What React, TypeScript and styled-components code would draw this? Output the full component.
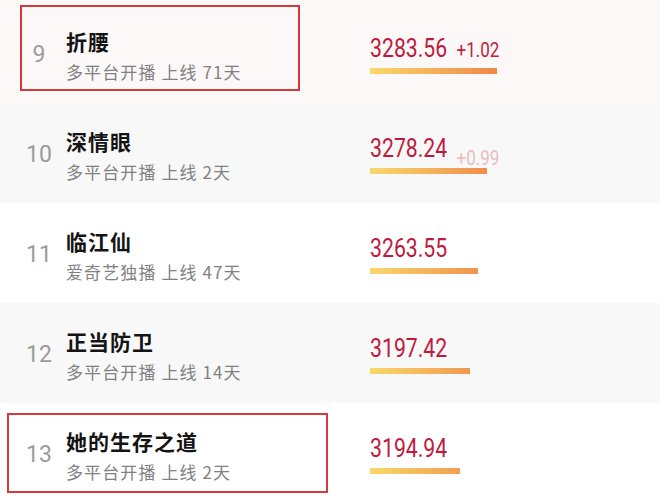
import React from "react";
import styled, { createGlobalStyle } from "styled-components";

const Global = createGlobalStyle`
  html, body { margin: 0; padding: 0; background: #ffffff; }
  body { width: 660px; height: 496px; overflow: hidden; font-family: "Noto Sans CJK SC", "Noto Sans", sans-serif; }
`;

const List = styled.div`
  padding-top: 3px;
  background: #fcf8f8;
`;

const Row = styled.div<{ $bg: string }>`
  position: relative;
  height: 100px;
  background: ${(p) => p.$bg};
  display: grid;
  grid-template-columns: 66px 304px 1fr;
  align-items: start;
`;

const Rank = styled.div`
  padding-left: 12px;
  padding-top: 39px;
  text-align: center;
  font-family: Roboto, "Noto Sans", sans-serif;
  font-size: 23px;
  line-height: 26px;
  color: #9b9b9b;
`;

const Info = styled.div`
  padding-top: 26px;
  display: flex;
  flex-direction: column;
`;

const Title = styled.div`
  font-family: "Noto Sans CJK SC", sans-serif;
  font-weight: 700;
  font-size: 21px;
  line-height: 24px;
  letter-spacing: 1px;
  color: #141414;
`;

const Sub = styled.div`
  margin-top: 9px;
  font-family: "Noto Sans CJK SC", sans-serif;
  font-size: 17px;
  line-height: 20px;
  letter-spacing: 1.1px;
  color: #818181;
`;

const ScoreCol = styled.div`
  padding-top: 33px;
  display: flex;
  flex-direction: column;
  align-items: flex-start;
`;

const ScoreLine = styled.div`
  display: flex;
  align-items: baseline;
  transform: scaleX(0.85);
  transform-origin: left center;
  font-family: Roboto, "Noto Sans", sans-serif;
  white-space: nowrap;
`;

const Score = styled.span`
  font-size: 25px;
  line-height: 25px;
  color: #bf1a3c;
`;

const Delta = styled.span<{ $dim?: boolean }>`
  margin-left: 11px;
  font-size: 20px;
  line-height: 20px;
  color: ${(p) => (p.$dim ? "#e9bcc3" : "#c0223f")};
  transform: ${(p) => (p.$dim ? "translateY(8px)" : "none")};
`;

const Bar = styled.div`
  margin-top: 7px;
  height: 6px;
  background: linear-gradient(90deg, #f9d86c 0%, #ee8549 100%);
  background-size: 130px 100%;
  background-repeat: no-repeat;
`;

const Mark = styled.div<{ $top: number; $left: number; $w: number; $h: number }>`
  position: absolute;
  top: ${(p) => p.$top}px;
  left: ${(p) => p.$left}px;
  width: ${(p) => p.$w}px;
  height: ${(p) => p.$h}px;
  border: 2px solid #d63a3c;
  box-sizing: border-box;
  pointer-events: none;
`;

type Item = {
  rank: number;
  title: string;
  sub: string;
  score: string;
  delta?: string;
  dim?: boolean;
  bar: number;
  bg: string;
  mark?: { top: number; left: number; w: number; h: number };
};

const items: Item[] = [
  { rank: 9, title: "折腰", sub: "多平台开播 上线 71天", score: "3283.56", delta: "+1.02", bar: 127, bg: "#fcf8f8", mark: { top: 2, left: 20, w: 280, h: 86 } },
  { rank: 10, title: "深情眼", sub: "多平台开播 上线 2天", score: "3278.24", delta: "+0.99", dim: true, bar: 117, bg: "#f8f8f8" },
  { rank: 11, title: "临江仙", sub: "爱奇艺独播 上线 47天", score: "3263.55", bar: 108, bg: "#ffffff" },
  { rank: 12, title: "正当防卫", sub: "多平台开播 上线 14天", score: "3197.42", bar: 100, bg: "#f8f8f8" },
  { rank: 13, title: "她的生存之道", sub: "多平台开播 上线 2天", score: "3194.94", bar: 90, bg: "#ffffff", mark: { top: 10, left: 7, w: 321, h: 80 } },
];

export default function App() {
  return (
    <>
      <Global />
      <List>
        {items.map((it) => (
          <Row key={it.rank} $bg={it.bg}>
            <Rank>{it.rank}</Rank>
            <Info>
              <Title>{it.title}</Title>
              <Sub>{it.sub}</Sub>
            </Info>
            <ScoreCol>
              <ScoreLine>
                <Score>{it.score}</Score>
                {it.delta && <Delta $dim={it.dim}>{it.delta}</Delta>}
              </ScoreLine>
              <Bar style={{ width: it.bar }} />
            </ScoreCol>
            {it.mark && <Mark $top={it.mark.top} $left={it.mark.left} $w={it.mark.w} $h={it.mark.h} />}
          </Row>
        ))}
      </List>
    </>
  );
}
